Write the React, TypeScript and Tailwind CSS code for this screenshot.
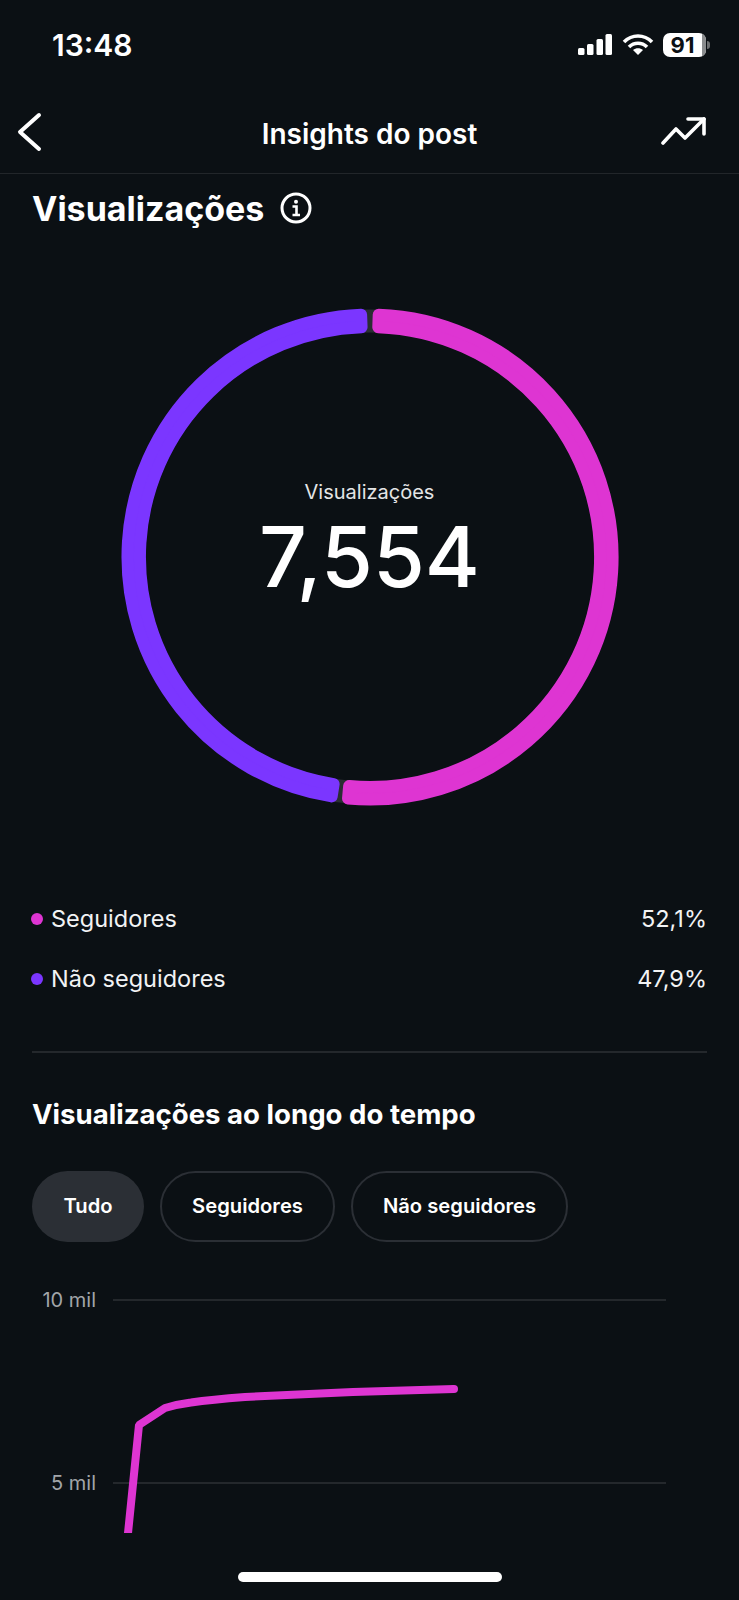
import React from 'react';

const PINK = '#de35d2';
const PURPLE = '#7b36ff';

// annular sector, drawn inset and stroked with a round join to get soft corners
const sector = (from: number, to: number, inner: number, outer: number) => {
  const pt = (r: number, deg: number) => {
    const a = (deg * Math.PI) / 180;
    return `${(250 + r * Math.sin(a)).toFixed(2)} ${(250 - r * Math.cos(a)).toFixed(2)}`;
  };
  const large = to - from > 180 ? 1 : 0;
  return `M${pt(outer, from)} A${outer} ${outer} 0 ${large} 1 ${pt(outer, to)} L${pt(inner, to)} A${inner} ${inner} 0 ${large} 0 ${pt(inner, from)} Z`;
};

const Donut = () => (
  <svg width="500" height="500" viewBox="0 0 500 500" className="block">
    <circle cx="250" cy="250" r="236" fill="none" stroke="#2a2e33" strokeWidth="23" />
    <path d={sector(2.06, 185.2, 230, 242.5)} fill={PINK} stroke={PINK} strokeWidth="12" strokeLinejoin="round" />
    <path d={sector(189.1, 357.9, 230, 242.5)} fill={PURPLE} stroke={PURPLE} strokeWidth="12" strokeLinejoin="round" />
  </svg>
);

const StatusIcons = () => (
  <div className="flex items-center">
    <svg width="34" height="22" viewBox="0 0 34 22" fill="white">
      <rect x="0" y="14" width="6.5" height="7" rx="1.5" />
      <rect x="9" y="10" width="6.5" height="11" rx="1.5" />
      <rect x="18.500" y="5" width="6.5" height="16" rx="1.5" />
      <rect x="27.5" y="0" width="6.5" height="21" rx="1.5" />
    </svg>
    <svg width="32" height="22" viewBox="0 0 32 22" fill="none" stroke="white" strokeWidth="3.6" className="ml-[10px]">
      <path d="M2 8 C10 0 22 0 30 8" />
      <path d="M7 13 C12 8 20 8 25 13" />
      <path d="M16 21 L11 16 C14 13.6 18 13.6 21 16 Z" fill="white" stroke="none" />
    </svg>
    <div className="ml-[9px] flex items-center">
      <div className="flex h-[24px] w-[43px] overflow-hidden rounded-[7px] bg-white">
        <span className="w-[39px] text-center text-[22px] font-bold leading-[24px] text-[#0b1014]">91</span>
        <span className="flex-1 bg-[#8a8c8e]" />
      </div>
      <div className="ml-[1px] h-[8px] w-[3px] rounded-r-sm bg-[#6d6f71]" />
    </div>
  </div>
);

const Legend = ({ color, label, value }: { color: string; label: string; value: string }) => (
  <div className="flex h-[60px] items-center justify-between text-[23.5px] text-[#f2f3f4]">
    <div className="flex items-center">
      <span className={`mr-[8px] h-[12px] w-[12px] rounded-full ${color}`} />
      <span>{label}</span>
    </div>
    <span className="mr-[1px]">{value}</span>
  </div>
);

export default function App() {
  return (
    <div
      className="flex h-[1600px] w-[739px] flex-col overflow-hidden bg-[#0b1014] text-white"
      style={{ fontFamily: 'Inter, "Noto Sans", sans-serif' }}
    >
      {/* status bar */}
      <div className="flex h-[90px] shrink-0 items-center justify-between pl-[52px] pr-[29px]">
        <span className="text-[30px] font-semibold">13:48</span>
        <StatusIcons />
      </div>

      {/* nav */}
      <div className="grid h-[84px] shrink-0 grid-cols-[1fr_auto_1fr] items-center border-b border-[#22262a]">
        <svg width="26" height="40" viewBox="0 0 26 40" fill="none" stroke="white" strokeWidth="4" strokeLinecap="round" strokeLinejoin="round" className="ml-[17px]">
          <path d="M22 3 L3 20 L22 37" />
        </svg>
        <h1 className="pt-[4px] text-[28px] font-semibold">Insights do post</h1>
        <svg width="46" height="32" viewBox="0 0 46 32" fill="none" stroke="white" strokeWidth="3.6" strokeLinecap="round" strokeLinejoin="round" className="mr-[32px] justify-self-end">
          <path d="M2 27 L15 13 L24 22 L43 3" />
          <path d="M27 3 L43 3 L43 18" />
        </svg>
      </div>

      {/* heading */}
      <div className="flex h-[68px] shrink-0 items-center px-[32px]">
        <h2 className="text-[34px] font-bold">Visualizações</h2>
        <svg width="32" height="32" viewBox="0 0 32 32" fill="none" stroke="white" strokeWidth="3" className="ml-[16px]">
          <circle cx="16" cy="16" r="14" />
          <circle cx="16" cy="9.8" r="2" fill="white" stroke="none" />
          <path d="M12.5 14.5 H16.5 V22.5 M12.5 23 H20" strokeWidth="2.6" />
        </svg>
      </div>

      {/* ring */}
      <div className="relative mx-auto mt-[65px] h-[500px] w-[500px] shrink-0">
        <Donut />
        <div className="absolute inset-0 flex flex-col items-center">
          <span className="mt-[172px] text-[20px] leading-[26px] text-[#e4e5e6]">Visualizações</span>
          <span className="mt-[2px] text-[84px] font-medium leading-[100px]">7,554</span>
        </div>
      </div>

      {/* legend */}
      <div className="mt-[82px] shrink-0 px-[31px]">
        <Legend color="bg-[#de35d2]" label="Seguidores" value="52,1%" />
        <Legend color="bg-[#7b36ff]" label="Não seguidores" value="47,9%" />
      </div>

      <div className="mx-[32px] mt-[42px] h-[2px] shrink-0 bg-[#24282c]" />

      <h3 className="mt-[43px] shrink-0 px-[32px] text-[27.6px] font-bold leading-[36px]">Visualizações ao longo do tempo</h3>

      {/* filter pills */}
      <div className="mt-[39px] flex h-[71px] shrink-0 gap-[16px] px-[32px] text-[20.2px] font-semibold">
        <div className="flex w-[112px] items-center justify-center rounded-full bg-[#2b2f35]">Tudo</div>
        <div className="flex w-[175px] items-center justify-center rounded-full border-2 border-[#2b2f35]">Seguidores</div>
        <div className="flex w-[217px] items-center justify-center rounded-full border-2 border-[#2b2f35]">Não seguidores</div>
      </div>

      {/* chart, cut off flat at the bottom of the svg */}
      <div className="mt-[45px] flex h-[291px] shrink-0">
        <div className="w-[96px] shrink-0 text-right text-[20px] leading-[28px] text-[#a2a5a9]">
          <div className="mt-[-1px]">10 mil</div>
          <div className="mt-[155px]">5 mil</div>
        </div>
        <svg width="560" height="246" viewBox="0 0 560 246" fill="none" className="ml-[17px]">
          <path d="M0 13 H553 M0 196 H553" stroke="#24282c" strokeWidth="2" />
          <path
            d="M14 256 L26 138 L52 121 C62 118 70 116.5 78 115.5 C95 113 112 111.5 132 110 L240 105 L341 102"
            stroke={PINK}
            strokeWidth="8"
            strokeLinejoin="bevel"
          />
          <circle cx="341" cy="102" r="4" fill={PINK} />
        </svg>
      </div>

      {/* home indicator */}
      <div className="mx-auto mt-[-6px] h-[10px] w-[264px] shrink-0 rounded-full bg-white" />
    </div>
  );
}
